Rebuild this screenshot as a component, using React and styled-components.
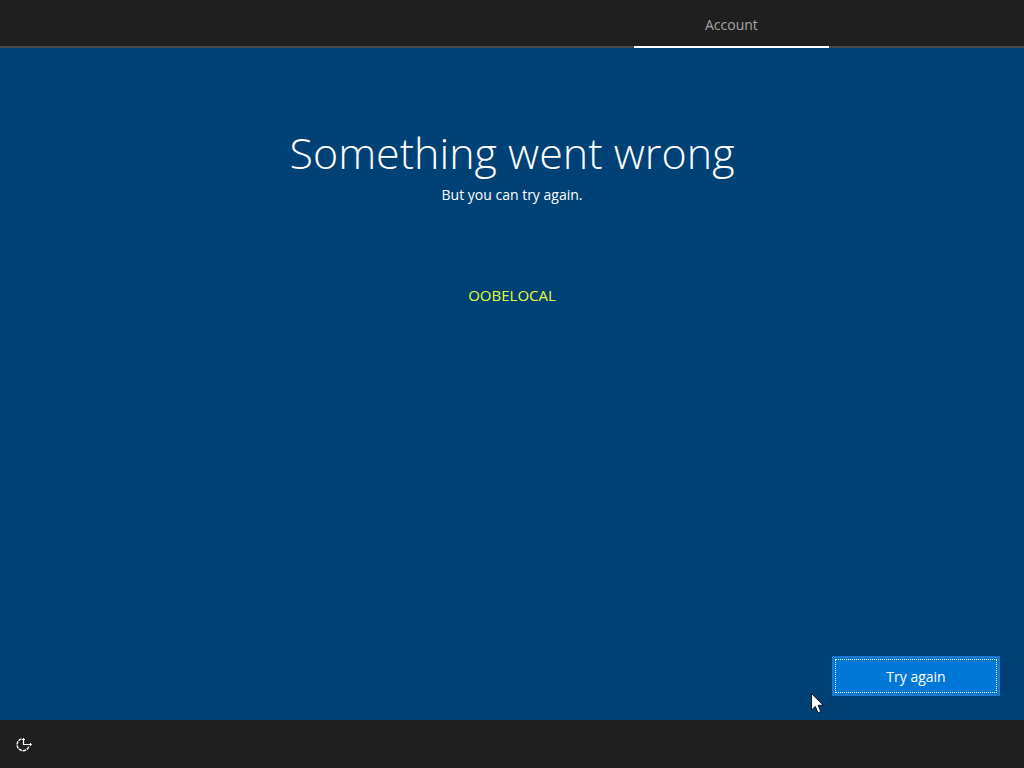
import React from 'react';
import styled, { createGlobalStyle } from 'styled-components';

const GlobalStyle = createGlobalStyle`
  *, *::before, *::after { box-sizing: border-box; }
  body {
    margin: 0;
    background: #004275;
    color: #fff;
    font-family: "Segoe UI", "Open Sans", "Noto Sans", sans-serif;
    font-size: 14px;
    line-height: 20px;
  }
`;

const Screen = styled.div`
  position: relative;
  display: flex;
  flex-direction: column;
  min-height: 100vh;
  background: #004275;
`;

const StepBar = styled.nav`
  display: grid;
  grid-template-columns: 13fr 4fr 4fr;
  height: 48px;
  background: #1f1f1f;
  box-shadow: inset 0 -2px #484848;
`;

const Step = styled.a`
  grid-column: 2;
  display: flex;
  align-items: center;
  justify-content: center;
  border-bottom: 2px solid ${(p) => (p.$active ? '#fff' : 'transparent')};
  padding-top: 4px;
  color: #a5a5a5;
  text-decoration: none;
`;

const Content = styled.main`
  flex: 1;
  display: flex;
  flex-direction: column;
  align-items: center;
  padding: 73px 24px 24px;
  text-align: center;
`;

const Title = styled.h1`
  margin: 0;
  font-size: 43px;
  font-weight: 300;
  line-height: 64px;
`;

const Message = styled.p`
  margin: 0;
`;

const ErrorCode = styled.p`
  margin: 80px 0 0;
  color: #e6ff3c;
  font-size: 15px;
`;

const Actions = styled.div`
  display: flex;
  justify-content: flex-end;
  align-self: stretch;
  margin-top: auto;
`;

const PrimaryButton = styled.button`
  width: 168px;
  height: 40px;
  padding: 2px 0 0;
  border: 2px solid #1a7bd0;
  background: #0078d7;
  color: #fff;
  font: inherit;
  outline: 1px dotted #fff;
  outline-offset: -4px;
`;

const Footer = styled.footer`
  display: flex;
  align-items: center;
  height: 48px;
  padding: 2px 12px 0;
  background: #1f1f1f;
`;

const IconButton = styled.button`
  display: flex;
  align-items: center;
  justify-content: center;
  width: 24px;
  height: 24px;
  padding: 0;
  border: 0;
  background: none;
  color: #fff;
`;

const Pointer = styled.svg`
  position: absolute;
  right: 200px;
  bottom: 54px;
  pointer-events: none;
`;

function EaseOfAccessIcon() {
  return (
    <svg width="18" height="18" viewBox="0 0 18 18" fill="none" stroke="currentColor" aria-hidden="true">
      <path d="M6.5 2.9A6 6 0 1 0 13.8 10.5" strokeWidth="1.4" strokeDasharray="3.4 .8" />
      <path d="M8.5 2.5V9M8 8.5H16.5" strokeWidth="1.2" />
      <path d="M7 4L8.5 2.5L10 4M15 7L16.5 8.5L15 10" strokeWidth="1" />
    </svg>
  );
}

export default function App() {
  return (
    <>
      <GlobalStyle />
      <Screen>
        <StepBar>
          <Step href="#account" $active>Account</Step>
        </StepBar>
        <Content>
          <Title>Something went wrong</Title>
          <Message>But you can try again.</Message>
          <ErrorCode>OOBELOCAL</ErrorCode>
          <Actions>
            <PrimaryButton type="button">Try again</PrimaryButton>
          </Actions>
        </Content>
        <Footer>
          <IconButton type="button" aria-label="Ease of access">
            <EaseOfAccessIcon />
          </IconButton>
        </Footer>
        <Pointer width="13" height="21" viewBox="0 0 13 21" aria-hidden="true">
          <path d="M.5 .5V17L4.3 13.4L7 19.8L9.8 18.6L7.1 12.3H12.2Z" fill="#fff" stroke="#101820" />
        </Pointer>
      </Screen>
    </>
  );
}
